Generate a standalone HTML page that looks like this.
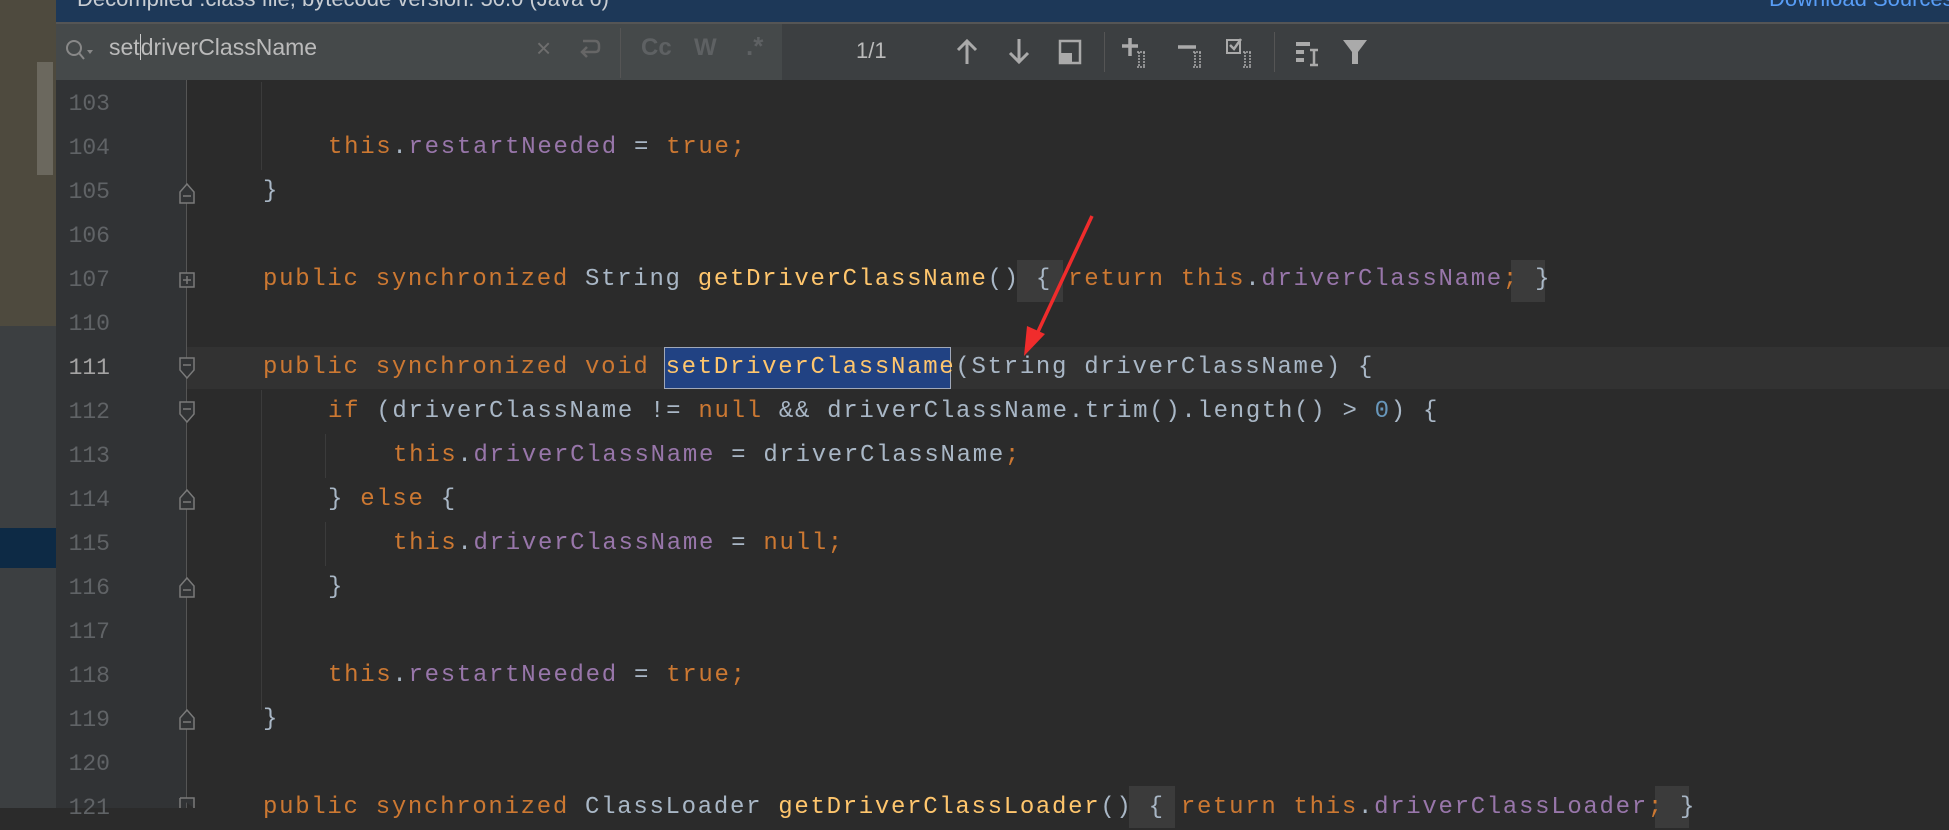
<!DOCTYPE html>
<html><head><meta charset="utf-8"><style>
*{margin:0;padding:0;box-sizing:border-box}
body{width:1949px;height:808px;overflow:hidden;background:#2b2b2b;position:relative;font-family:"Liberation Mono",monospace}
.abs{position:absolute;white-space:nowrap}
.ln{position:absolute;left:56px;width:54px;text-align:right;color:#606366;font-size:23px;line-height:44px;height:44px}
.cl{position:absolute;white-space:pre;font-size:24px;letter-spacing:1.7px;line-height:44px;height:44px;color:#a9b7c6}
.k{color:#cc7832}.f{color:#9876aa}.m{color:#ffc66d}.n{color:#6897bb}
.ic{position:absolute;color:#8a8d90;font-family:"Liberation Sans",sans-serif}
</style></head><body>
<div class="abs" style="left:56px;top:0;width:1893px;height:22px;background:#1d3858"></div>
<div class="abs" style="left:77px;top:-14px;color:#c8cdd3;font:22px 'Liberation Sans',sans-serif">Decompiled .class file, bytecode version: 50.0 (Java 6)</div>
<div class="abs" style="left:1769px;top:-14px;color:#589df6;font:22px 'Liberation Sans',sans-serif">Download Sources</div>
<div class="abs" style="left:56px;top:22px;width:1893px;height:2px;background:#555"></div>
<div class="abs" style="left:0;top:0;width:56px;height:326px;background:#4e4a3e"></div>
<div class="abs" style="left:0;top:326px;width:56px;height:482px;background:#3c3f41"></div>
<div class="abs" style="left:37px;top:62px;width:16px;height:113px;background:#6b685e"></div>
<div class="abs" style="left:0;top:528px;width:56px;height:40px;background:#0d2a45"></div>
<div class="abs" style="left:56px;top:24px;width:1893px;height:56px;background:#3c3f41"></div>
<div class="abs" style="left:56px;top:24px;width:726px;height:56px;background:#45494a"></div>
<div class="abs" style="left:620px;top:28px;width:1px;height:50px;background:#555"></div>
<div class="abs" style="left:1104px;top:32px;width:1px;height:40px;background:#555"></div>
<div class="abs" style="left:1274px;top:32px;width:1px;height:40px;background:#555"></div>
<svg class="abs" style="left:64px;top:38px" width="32" height="26"><circle cx="10" cy="10" r="7" fill="none" stroke="#888" stroke-width="2"/><path d="M15 15 L20 21" stroke="#888" stroke-width="2"/><path d="M23 12 L29 12 L26 16Z" fill="#888"/></svg>
<div class="abs" style="left:109px;top:34px;color:#bbbbbb;font:23px 'Liberation Sans',sans-serif">set<span style="border-left:1px solid #ccc"></span>driverClassName</div>
<div class="ic" style="left:536px;top:33px;font-size:26px;color:#6e6e6e">×</div>
<svg class="abs" style="left:577px;top:38px" width="26" height="26"><path d="M6 3 H18 Q22 3 22 8 V10 Q22 14 18 14 H6 M10 9 L5 14 L10 19" fill="none" stroke="#666" stroke-width="2.5"/></svg>
<div class="ic" style="left:641px;top:34px;font-size:24px;font-weight:bold;color:#5e6163">Cc</div>
<div class="ic" style="left:694px;top:34px;font-size:24px;font-weight:bold;color:#5e6163">W</div>
<div class="ic" style="left:746px;top:31px;font-size:26px;font-weight:bold;color:#5e6163">.*</div>
<div class="ic" style="left:856px;top:38px;font-size:22px;color:#bbb">1/1</div>
<svg class="abs" style="left:955px;top:38px" width="24" height="28"><path d="M12 26V3 M3 12 L12 3 L21 12" fill="none" stroke="#aaa" stroke-width="3"/></svg>
<svg class="abs" style="left:1007px;top:38px" width="24" height="28"><path d="M12 1V24 M3 15 L12 24 L21 15" fill="none" stroke="#aaa" stroke-width="3"/></svg>
<svg class="abs" style="left:1058px;top:39px" width="24" height="26"><rect x="2" y="2" width="20" height="22" fill="none" stroke="#aaa" stroke-width="2.5"/><rect x="2" y="14" width="12" height="10" fill="#aaa"/></svg>
<svg class="abs" style="left:1120px;top:36px" width="36" height="34"><path d="M10 2V20 M2 10H18" stroke="#aaa" stroke-width="3.5"/><path d="M19 16V31 M24 16V31 M17 16H26 M17 31H26" stroke="#aaa" stroke-width="1.5" stroke-dasharray="2 1"/></svg>
<svg class="abs" style="left:1176px;top:36px" width="36" height="34"><path d="M2 11H20" stroke="#aaa" stroke-width="3.5"/><path d="M19 16V31 M24 16V31 M17 16H26 M17 31H26" stroke="#aaa" stroke-width="1.5" stroke-dasharray="2 1"/></svg>
<svg class="abs" style="left:1225px;top:36px" width="36" height="34"><rect x="2" y="4" width="13" height="13" fill="none" stroke="#aaa" stroke-width="2"/><path d="M5 9 L9 13 L16 3" fill="none" stroke="#aaa" stroke-width="2.5"/><path d="M20 16V31 M25 16V31 M18 16H27 M18 31H27" stroke="#aaa" stroke-width="1.5" stroke-dasharray="2 1"/></svg>
<svg class="abs" style="left:1294px;top:38px" width="30" height="30"><rect x="2" y="4" width="14" height="4" fill="#aaa"/><rect x="2" y="12" width="8" height="4" fill="#aaa"/><rect x="2" y="20" width="8" height="4" fill="#aaa"/><path d="M20 12V27 M16 12H24 M16 27H24" stroke="#aaa" stroke-width="2.5"/></svg>
<svg class="abs" style="left:1342px;top:38px" width="28" height="28"><path d="M1 2H25 L16 14 V26 H10 V14Z" fill="#aaa"/></svg>
<div class="abs" style="left:56px;top:80px;width:131px;height:728px;background:#313335"></div>
<div class="abs" style="left:186px;top:80px;width:1px;height:728px;background:#555"></div>
<div class="abs" style="left:187px;top:347px;width:1762px;height:42px;background:#323232"></div>
<div class="abs" style="left:261px;top:82px;width:1px;height:88px;background:#3b3b3b"></div>
<div class="abs" style="left:261px;top:390px;width:1px;height:320px;background:#3b3b3b"></div>
<div class="abs" style="left:325px;top:434px;width:1px;height:44px;background:#3b3b3b"></div>
<div class="abs" style="left:325px;top:522px;width:1px;height:44px;background:#3b3b3b"></div>
<div class="abs" style="left:664px;top:347px;width:287px;height:42px;background:#214283;border:1px solid #a0a8b8"></div>
<div class="abs" style="left:1017px;top:260px;width:46px;height:42px;background:#3b3b3b"></div>
<div class="abs" style="left:1511px;top:260px;width:34px;height:42px;background:#3b3b3b"></div>
<div class="ln" style="top:82px">103</div>
<div class="ln" style="top:126px">104</div>
<div class="ln" style="top:170px">105</div>
<div class="ln" style="top:214px">106</div>
<div class="ln" style="top:258px">107</div>
<div class="ln" style="top:302px">110</div>
<div class="ln" style="top:346px;color:#a4a3a3">111</div>
<div class="ln" style="top:390px">112</div>
<div class="ln" style="top:434px">113</div>
<div class="ln" style="top:478px">114</div>
<div class="ln" style="top:522px">115</div>
<div class="ln" style="top:566px">116</div>
<div class="ln" style="top:610px">117</div>
<div class="ln" style="top:654px">118</div>
<div class="ln" style="top:698px">119</div>
<div class="ln" style="top:742px">120</div>
<div class="ln" style="top:786px">121</div>
<svg class="abs" style="left:178px;top:0" width="20" height="808">
<g fill="#313335" stroke="#7a7a7a" stroke-width="1.5">
<path d="M2 192 L9 184 L16 192 V203 H2Z"/><path d="M5 196H13"/>
<rect x="2" y="273" width="14" height="14"/><path d="M5 280H13 M9 276V284"/>
<path d="M2 358 H16 V370 L9 378 L2 370Z"/><path d="M5 365H13"/>
<path d="M2 402 H16 V414 L9 422 L2 414Z"/><path d="M5 409H13"/>
<path d="M2 498 L9 490 L16 498 V509 H2Z"/><path d="M5 502H13"/>
<path d="M2 586 L9 578 L16 586 V597 H2Z"/><path d="M5 590H13"/>
<path d="M2 718 L9 710 L16 718 V729 H2Z"/><path d="M5 722H13"/>
<path d="M2 798 H16 V808 M2 798 V808"/>
</g></svg>
<div class="cl" style="left:328px;top:126px"><span class="k">this</span>.<span class="f">restartNeeded</span> = <span class="k">true;</span></div>
<div class="cl" style="left:263px;top:170px">}</div>
<div class="cl" style="left:263px;top:258px"><span class="k">public synchronized </span>String <span class="m">getDriverClassName</span>() { <span class="k">return this</span>.<span class="f">driverClassName</span><span class="k">;</span> }</div>
<div class="cl" style="left:263px;top:346px"><span class="k">public synchronized void </span><span class="m">setDriverClassName</span>(String driverClassName) {</div>
<div class="cl" style="left:328px;top:390px"><span class="k">if </span>(driverClassName != <span class="k">null </span>&amp;&amp; driverClassName.trim().length() &gt; <span class="n">0</span>) {</div>
<div class="cl" style="left:393px;top:434px"><span class="k">this</span>.<span class="f">driverClassName</span> = driverClassName<span class="k">;</span></div>
<div class="cl" style="left:328px;top:478px">} <span class="k">else </span>{</div>
<div class="cl" style="left:393px;top:522px"><span class="k">this</span>.<span class="f">driverClassName</span> = <span class="k">null;</span></div>
<div class="cl" style="left:328px;top:566px">}</div>
<div class="cl" style="left:328px;top:654px"><span class="k">this</span>.<span class="f">restartNeeded</span> = <span class="k">true;</span></div>
<div class="cl" style="left:263px;top:698px">}</div>
<div class="abs" style="left:1129px;top:786px;width:46px;height:42px;background:#3b3b3b"></div>
<div class="abs" style="left:1655px;top:786px;width:34px;height:42px;background:#3b3b3b"></div>
<div class="cl" style="left:263px;top:786px"><span class="k">public synchronized </span>ClassLoader <span class="m">getDriverClassLoader</span>() { <span class="k">return this</span>.<span class="f">driverClassLoader</span><span class="k">;</span> }</div>
<svg class="abs" style="left:0;top:0" width="1949" height="808"><path d="M1092 216 L1036 336" stroke="#f02c2c" stroke-width="3.5"/><path d="M1024 356 L1027 326 L1045 334Z" fill="#f02c2c"/></svg>
</body></html>
